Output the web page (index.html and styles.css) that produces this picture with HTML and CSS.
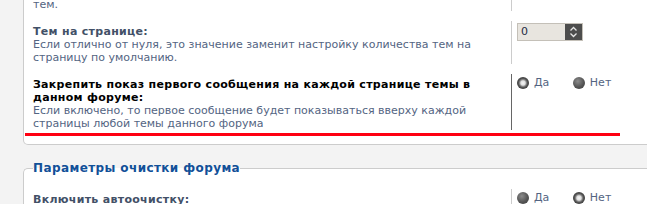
FILE: index.html
```html
<!DOCTYPE html>
<html lang="ru">
  <head>
    <meta charset="UTF-8" />
    <title>Настройки форума</title>
    <link rel="stylesheet" href="styles.css">
  </head>
  <body>
    <div class="panel">
      <dl class="row">
        <dt>
          <label>Активные темы:</label>
          <span class="explain">Количество отображаемых в списке активных<br>тем.</span>
        </dt>
        <dd></dd>
      </dl>
      <dl class="row">
        <dt>
          <label>Тем на странице:</label>
          <span class="explain">Если отлично от нуля, это значение заменит настройку количества тем на страницу по умолчанию.</span>
        </dt>
        <dd>
          <div class="spin">
            <span class="val">0</span>
            <span class="arrows">
              <svg width="9" height="12" viewBox="0 0 9 12">
                <path d="M1.5 4.5 L4.5 1.5 L7.5 4.5" fill="none" stroke="#e6e6e6" stroke-width="1.3"/>
                <path d="M1.5 7.5 L4.5 10.5 L7.5 7.5" fill="none" stroke="#e6e6e6" stroke-width="1.3"/>
              </svg>
            </span>
          </div>
        </dd>
      </dl>
      <dl class="row hover">
        <dt>
          <label>Закрепить показ первого сообщения на каждой странице темы в данном форуме:</label>
          <span class="explain">Если включено, то первое сообщение будет показываться вверху каждой страницы любой темы данного форума</span>
        </dt>
        <dd>
          <span class="choice"><span class="radio checked"></span>Да</span>
          <span class="choice"><span class="radio"></span>Нет</span>
        </dd>
      </dl>
      <div class="marker"></div>
    </div>

    <fieldset class="panel-set">
      <legend>Параметры очистки форума</legend>
      <dl class="row">
        <dt>
          <label>Включить автоочистку:</label>
          <span class="explain">Удаляет из форума темы, в которых не было сообщений заданное время.</span>
        </dt>
        <dd>
          <span class="choice"><span class="radio"></span>Да</span>
          <span class="choice"><span class="radio checked"></span>Нет</span>
        </dd>
      </dl>
    </fieldset>
  </body>
</html>
```

FILE: styles.css
```css
* {
  box-sizing: border-box;
}

body {
  margin: 0;
  background-color: #f3f3f3;
  font-family: "DejaVu Sans", Verdana, sans-serif;
  font-size: 11px;
  line-height: 13px;
  color: #536482;
  overflow: hidden;
}

.panel {
  width: 700px;
  margin: -32px 0 0 23px;
  padding: 0 0 8px 9px;
  background-color: #fff;
  border: 1px solid #ccc;
  border-top: none;
  border-radius: 0 0 0 5px;
}

.row {
  display: flex;
  margin: 0 0 10px;
}

.row dt {
  width: 478px;
  padding: 4px 0 0;
}

.row dd {
  margin: 0;
  padding: 2px 0 0 5px;
  border-left: 1px solid #ccc;
}

.row label {
  display: block;
  font-weight: bold;
  letter-spacing: 0.3px;
  color: #425067;
}

.explain {
  display: block;
}

.row.hover label {
  color: #000;
}

.row.hover dd {
  border-left-color: #666;
}

.panel .row:last-of-type {
  margin-bottom: 0;
}

.marker {
  width: 595px;
  height: 3px;
  margin: 3px 0 0 -8px;
  background-color: #ff0011;
}

/* number box */
.spin {
  display: flex;
  width: 66px;
  height: 18px;
  border: 1px solid #c4c0b8;
  background-color: #e8e5df;
}

.spin .val {
  flex: 1;
  padding-left: 3px;
  line-height: 16px;
  color: #1e2a44;
}

.spin .arrows {
  width: 17px;
  display: flex;
  align-items: center;
  justify-content: center;
  background-color: #4d4d4d;
}

/* radios */
.choice {
  display: inline-flex;
  align-items: center;
  gap: 5px;
  margin-right: 20px;
  line-height: 13px;
}

.radio {
  width: 12px;
  height: 12px;
  border-radius: 50%;
  background: radial-gradient(circle at 40% 35%, #8c8c8c 0, #555 55%, #3a3a3a 100%);
}

.radio.checked {
  background: radial-gradient(circle at 50% 50%, #f6f6f6 0, #e0e0e0 2.2px, #8a8a8a 3.4px, #555 4.5px, #3c3c3c 6px);
}

.panel-set {
  width: 700px;
  margin: 17px 0 0 23px;
  padding: 14px 0 0 9px;
  background-color: #fff;
  border: 1px solid #ccc;
  border-right: none;
  border-radius: 5px 0 0 0;
}

.panel-set legend {
  padding: 0;
  font-weight: bold;
  font-size: 12px;
  letter-spacing: 0.4px;
  color: #115098;
}
```
